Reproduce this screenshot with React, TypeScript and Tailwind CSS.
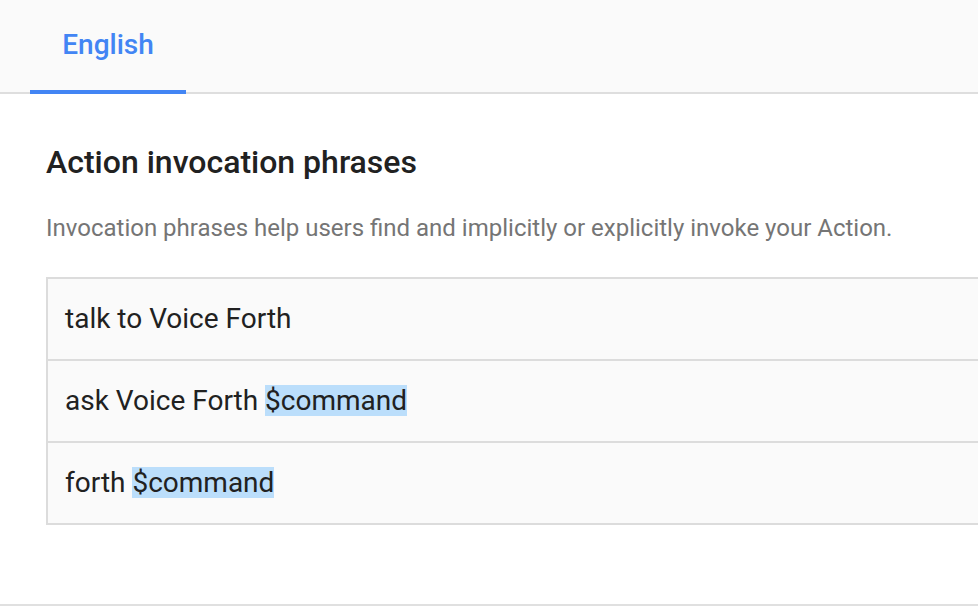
import React from "react";

const rows: { text: string; param?: string }[] = [
  { text: "talk to Voice Forth" },
  { text: "ask Voice Forth ", param: "$command" },
  { text: "forth ", param: "$command" },
];

export default function App() {
  return (
    <div className="w-[978px] h-[608px] overflow-hidden bg-white" style={{ fontFamily: "Roboto, 'Noto Sans', sans-serif" }}>
      <div className="h-[94px] bg-[#fafafa] border-b-2 border-[#dedede] flex">
        <div className="ml-[30px] w-[156px] relative flex items-center justify-center">
          <span className="text-[28px] font-medium text-[#4285f4] leading-none -mt-[2px]">English</span>
          <div className="absolute left-0 right-0 -bottom-[2px] h-[4px] bg-[#4285f4]" />
        </div>
      </div>
      <div className="pl-[46px]">
        <h1 className="mt-[48px] text-[32px] font-medium text-[#212121] leading-[40px]">Action invocation phrases</h1>
        <p className="mt-[30px] text-[24px] text-[#757575] leading-[32px]">Invocation phrases help users find and implicitly or explicitly invoke your Action.</p>
        <div className="mt-[33px] w-[1000px] border-2 border-[#dcdcdc] bg-[#fafafa]">
          {rows.map((r, i) => (
            <div key={i} className={"box-content h-[80px] flex items-center pl-[17px] text-[28px] text-[#212121] " + (i > 0 ? "border-t-2 border-[#dcdcdc]" : "")}>
              <span className="whitespace-pre">
                {r.text}
                {r.param && <span className="inline-block leading-[31px] bg-[#bbdefb]">{r.param}</span>}
              </span>
            </div>
          ))}
        </div>
      </div>
      <div className="mt-[79px] border-t-2 border-[#e0e0e0]" />
    </div>
  );
}
